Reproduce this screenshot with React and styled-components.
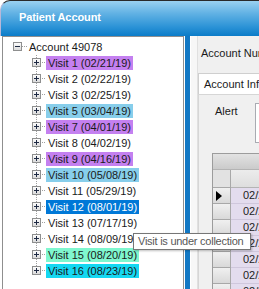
import React from "react";
import styled, { createGlobalStyle } from "styled-components";

const Global = createGlobalStyle`
  html, body { margin: 0; padding: 0; background: #ffffff; overflow: hidden; }
  body { font-family: "Liberation Sans", Arial, sans-serif; font-size: 11px; color: #1a1a1a; }
`;

const Window = styled.div`
  position: relative;
  width: 259px;
  height: 289px;
  overflow: hidden;
  background: #ffffff;
`;

const TitleBar = styled.div`
  box-sizing: border-box;
  height: 36px;
  display: flex;
  align-items: center;
  padding: 0 0 3px 18px;
  border-top: 1px solid #2a2a2a;
  border-left: 1px solid #b9b7d8;
  border-top-left-radius: 10px;
  background: linear-gradient(to bottom, #9ad1f1 0%, #62b2e4 35%, #2a92d6 75%, #0b7cc8 100%);
`;

const Title = styled.span`
  color: #ffffff;
  font-weight: bold;
  font-size: 11px;
  letter-spacing: -0.1px;
`;

const Body = styled.div`
  display: flex;
  height: 253px;
  padding-left: 2px;
`;

const TreePanel = styled.div`
  box-sizing: border-box;
  width: 182px;
  flex: none;
  border: 1px solid #8f8f8f;
  border-bottom: none;
  padding-top: 2px;
  background: #ffffff;
  overflow: hidden;
`;

const TreeRow = styled.div`
  display: flex;
  align-items: center;
  height: 16px;
`;

const Gutter = styled.svg`
  flex: none;
  display: block;
`;

const NodeLabel = styled.span`
  height: 14px;
  line-height: 14px;
  padding: 0 2px;
  white-space: nowrap;
  background: ${(p) => p.$bg || "transparent"};
  color: ${(p) => p.$fg || "#1a1a1a"};
`;

const Splitter = styled.div`
  flex: none;
  width: 5px;
  margin-left: 1px;
  background: #1278c4;
`;

const RightPanel = styled.div`
  flex: 1;
  display: flex;
  min-width: 0;
  border-left: 1px solid #ffffff;
`;

const SideStrip = styled.div`
  flex: none;
  width: 6px;
  background: #f7f7f7;
  border-right: 1px solid #e0e0e0;
`;

const Main = styled.div`
  flex: 1;
  min-width: 0;
  background: #f0f0f0;
  overflow: hidden;
`;

const FieldLabel = styled.div`
  margin: 11px 0 0 3px;
  line-height: 13px;
  white-space: nowrap;
`;

const Tabs = styled.div`
  margin-top: 13px;
  width: 300px;
`;

const TabStrip = styled.div`
  display: flex;
  height: 21px;
`;

const Tab = styled.div`
  box-sizing: border-box;
  height: 21px;
  padding: 0 5px;
  line-height: 20px;
  border: 1px solid #cfcfcf;
  border-bottom: none;
  background: #ffffff;
  white-space: nowrap;
`;

const TabPage = styled.div`
  border-top: 1px solid #d6d6d6;
  border-left: 1px solid #d6d6d6;
  background: #f0f0f0;
  padding-top: 8px;
  height: 200px;
`;

const AlertRow = styled.div`
  display: flex;
  align-items: flex-start;
  padding-left: 16px;
`;

const AlertLabel = styled.span`
  width: 40px;
  flex: none;
  padding-top: 2px;
  line-height: 13px;
`;

const AlertBox = styled.div`
  box-sizing: border-box;
  width: 200px;
  height: 40px;
  flex: none;
  border: 1px solid #a9abb2;
  background: #ffffff;
`;

const Grid = styled.div`
  margin: 10px 0 0 13px;
  width: 260px;
  border-top: 1px solid #9c9c9c;
  border-left: 1px solid #9c9c9c;
`;

const CaptionBand = styled.div`
  height: 15px;
  border-bottom: 1px solid #b4b4b4;
  background: linear-gradient(to bottom, #e2e2e2, #cbcbcb);
`;

const GridRow = styled.div`
  display: flex;
  height: ${(p) => p.$h}px;
`;

const RowHead = styled.div`
  box-sizing: border-box;
  width: 18px;
  flex: none;
  display: flex;
  align-items: center;
  padding-left: 3px;
  border-right: 1px solid #a8a8a8;
  border-bottom: 1px solid #a8a8a8;
  background: ${(p) => (p.$header ? "#e2e2e2" : "linear-gradient(to bottom, #f0f0f0, #d9d9d9)")};
`;

const ColHead = styled.div`
  flex: 1;
  border-bottom: 1px solid #b4b4b4;
  background: linear-gradient(to bottom, #ececec, #dedede);
`;

const DataCell = styled.div`
  box-sizing: border-box;
  flex: 1;
  padding-left: 12px;
  line-height: 15px;
  border-bottom: 1px solid #cfc7dc;
  background: #e3dcee;
  color: #222222;
  white-space: nowrap;
`;

const Tooltip = styled.div`
  position: absolute;
  left: 133px;
  top: 233px;
  box-sizing: border-box;
  width: 118px;
  height: 17px;
  padding: 0 4px;
  line-height: 15px;
  border: 1px solid #767676;
  background: #ffffff;
  color: #575757;
  font-size: 11px;
  letter-spacing: -0.25px;
  white-space: nowrap;
  box-shadow: 1px 1px 2px rgba(0, 0, 0, 0.25);
  z-index: 5;
`;

const PURPLE = "#c480f0";
const SKY = "#87ceeb";
const SEL = "#0078d7";
const AQUA = "#7ff7cf";
const CYAN = "#14d8f2";

const visits = [
  ["Visit 1 (02/21/19)", PURPLE],
  ["Visit 2 (02/22/19)"],
  ["Visit 3 (02/25/19)"],
  ["Visit 5 (03/04/19)", SKY],
  ["Visit 7 (04/01/19)", PURPLE],
  ["Visit 8 (04/02/19)"],
  ["Visit 9 (04/16/19)", PURPLE],
  ["Visit 10 (05/08/19)", SKY],
  ["Visit 11 (05/29/19)"],
  ["Visit 12 (08/01/19)", SEL, "#ffffff"],
  ["Visit 13 (07/17/19)"],
  ["Visit 14 (08/09/19)"],
  ["Visit 15 (08/20/19)", AQUA],
  ["Visit 16 (08/23/19)", CYAN],
];

const gridDates = ["02/21/19", "02/21/19", "02/21/19", "02/21/19", "02/21/19", "02/21/19", "02/21/19"];

function ExpandBox({ x, plus }) {
  return (
    <g>
      <defs>
        <linearGradient id="boxg" x1="0" y1="0" x2="0" y2="1">
          <stop offset="0" stopColor="#ffffff" />
          <stop offset="1" stopColor="#d8d8d8" />
        </linearGradient>
      </defs>
      <rect x={x + 0.5} y={3.5} width={8} height={8} fill="url(#boxg)" stroke="#8e8f8f" />
      <line x1={x + 2} y1={7.5} x2={x + 7} y2={7.5} stroke="#1e2a44" />
      {plus && <line x1={x + 4.5} y1={5} x2={x + 4.5} y2={10} stroke="#1e2a44" />}
    </g>
  );
}

function RootLines() {
  return (
    <Gutter width="24" height="16" viewBox="0 0 24 16">
      <line x1="19" y1="7.5" x2="24" y2="7.5" stroke="#a0a0a0" strokeDasharray="1 1" />
      <ExpandBox x={10} plus={false} />
    </Gutter>
  );
}

function ChildLines({ last }) {
  return (
    <Gutter width="43" height="16" viewBox="0 0 43 16">
      <line x1="33.5" y1="0" x2="33.5" y2={last ? 8 : 16} stroke="#a0a0a0" strokeDasharray="1 1" />
      <line x1="39" y1="7.5" x2="43" y2="7.5" stroke="#a0a0a0" strokeDasharray="1 1" />
      <ExpandBox x={29} plus />
    </Gutter>
  );
}

function Arrow() {
  return (
    <svg width="6" height="10" viewBox="0 0 6 10">
      <polygon points="0,0 6,5 0,10" fill="#000000" />
    </svg>
  );
}

export default function App() {
  return (
    <>
      <Global />
      <Window>
        <TitleBar>
          <Title>Patient Account</Title>
        </TitleBar>
        <Body>
          <TreePanel>
            <TreeRow>
              <RootLines />
              <NodeLabel>Account 49078</NodeLabel>
            </TreeRow>
            {visits.map(([text, bg, fg], i) => (
              <TreeRow key={text}>
                <ChildLines last={i === visits.length - 1} />
                <NodeLabel $bg={bg} $fg={fg}>
                  {text}
                </NodeLabel>
              </TreeRow>
            ))}
          </TreePanel>
          <Splitter />
          <RightPanel>
            <SideStrip />
            <Main>
              <FieldLabel>Account Number</FieldLabel>
              <Tabs>
                <TabStrip>
                  <Tab>Account Information</Tab>
                </TabStrip>
                <TabPage>
                  <AlertRow>
                    <AlertLabel>Alert</AlertLabel>
                    <AlertBox />
                  </AlertRow>
                  <Grid>
                    <CaptionBand />
                    <GridRow $h={18}>
                      <RowHead $header />
                      <ColHead />
                    </GridRow>
                    {gridDates.map((d, i) => (
                      <GridRow $h={16} key={i}>
                        <RowHead>{i === 0 && <Arrow />}</RowHead>
                        <DataCell>{d}</DataCell>
                      </GridRow>
                    ))}
                  </Grid>
                </TabPage>
              </Tabs>
            </Main>
          </RightPanel>
        </Body>
        <Tooltip>Visit is under collection</Tooltip>
      </Window>
    </>
  );
}
